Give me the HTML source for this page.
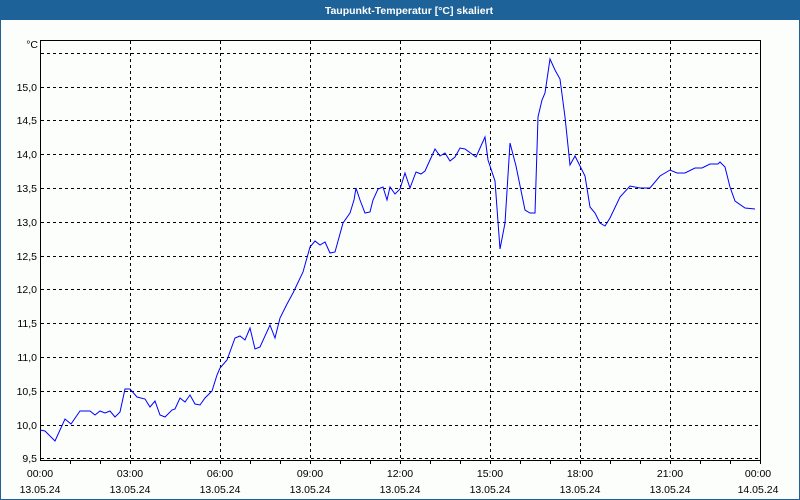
<!DOCTYPE html>
<html><head><style>
html,body{margin:0;padding:0;width:800px;height:500px;overflow:hidden;background:#fcfefc}
</style></head><body>
<svg width="800" height="500" xmlns="http://www.w3.org/2000/svg" font-family="Liberation Sans, sans-serif" font-size="10.5">
<rect x="0" y="0" width="800" height="500" fill="#fcfefc"/>
<rect x="0" y="0" width="800" height="20" fill="#1d6399"/>
<rect x="0" y="0" width="1" height="500" fill="#1d6399"/>
<rect x="799" y="0" width="1" height="500" fill="#1d6399"/>
<rect x="0" y="499" width="800" height="1" fill="#1d6399"/>
<text x="409" y="14" fill="#fff" font-weight="bold" text-anchor="middle" font-size="10.5">Taupunkt-Temperatur [°C] skaliert</text>
<g stroke="#000" stroke-dasharray="3,3" stroke-width="1">
<path d="M41 53.5H758M41 87.5H758M41 120.5H758M41 154.5H758M41 188.5H758M41 222.5H758M41 256.5H758M41 289.5H758M41 323.5H758M41 357.5H758M41 391.5H758M41 425.5H758M41 458.5H758"/>
<path d="M130.5 41V461M220.5 41V461M310.5 41V461M400.5 41V461M490.5 41V461M580.5 41V461M670.5 41V461"/>
</g>
<rect x="40.5" y="40.5" width="720" height="420" fill="none" stroke="#000"/>
<path stroke="#000" d="M70.5 461v3M100.5 461v3M130.5 461v3M160.5 461v3M190.5 461v3M220.5 461v3M250.5 461v3M280.5 461v3M310.5 461v3M340.5 461v3M370.5 461v3M400.5 461v3M430.5 461v3M460.5 461v3M490.5 461v3M520.5 461v3M550.5 461v3M580.5 461v3M610.5 461v3M640.5 461v3M670.5 461v3M700.5 461v3M730.5 461v3M760.5 461v3"/>
<polyline fill="none" stroke="#0000ff" stroke-width="1" points="40,430 45,431 52,438 55,441 65,419 71,424 80,411 90,411 95,415 100,411 105,413 110,411 115,417 120,412 125,389 130,389 137,397 145,399 150,407 155,401 160,415 165,417 172,410 175,409 180,398 185,402 190,395 195,404 200,405 205,398 212,391 217,375 220,368 227,360 235,338 240,336 245,340 250,328 255,349 260,347 270,325 275,338 280,318 287,304 293,293 303,272 310,247 315,241 320,245 325,242 330,253 335,252 343,223 350,213 354,200 356,188 360,200 365,213 370,212 373,200 378,189 383,187 387,200 390,187 395,194 400,189 405,173 410,188 416,172 421,174 425,171 435,149 440,156 445,153 450,161 455,157 460,148 465,149 476,157 485,137 488,160 495,181 500,249 505,223 510,143 516,166 525,210 530,213 535,213 538,117 542,100 545,93 550,59 555,70 560,79 565,117 570,165 575,156 585,176 590,207 595,213 600,223 605,226 610,218 620,197 630,186 640,188 650,188 660,176 670,170 677,173 685,173 695,168 702,168 710,164 718,164 720,162 725,167 730,187 735,201 745,208 755,209"/>
<g fill="#000" text-anchor="end">
<text x="38" y="48">°C</text>
<text x="37" y="91">15,0</text>
<text x="37" y="124">14,5</text>
<text x="37" y="158">14,0</text>
<text x="37" y="192">13,5</text>
<text x="37" y="226">13,0</text>
<text x="37" y="260">12,5</text>
<text x="37" y="293">12,0</text>
<text x="37" y="327">11,5</text>
<text x="37" y="361">11,0</text>
<text x="37" y="395">10,5</text>
<text x="37" y="429">10,0</text>
<text x="37" y="462">9,5</text>
</g>
<g fill="#000" text-anchor="middle">
<text x="40" y="477">00:00</text><text x="40" y="493">13.05.24</text>
<text x="130" y="477">03:00</text><text x="130" y="493">13.05.24</text>
<text x="220" y="477">06:00</text><text x="220" y="493">13.05.24</text>
<text x="310" y="477">09:00</text><text x="310" y="493">13.05.24</text>
<text x="400" y="477">12:00</text><text x="400" y="493">13.05.24</text>
<text x="490" y="477">15:00</text><text x="490" y="493">13.05.24</text>
<text x="580" y="477">18:00</text><text x="580" y="493">13.05.24</text>
<text x="670" y="477">21:00</text><text x="670" y="493">13.05.24</text>
<text x="758" y="477">00:00</text><text x="758" y="493">14.05.24</text>
</g>
</svg>
</body></html>
